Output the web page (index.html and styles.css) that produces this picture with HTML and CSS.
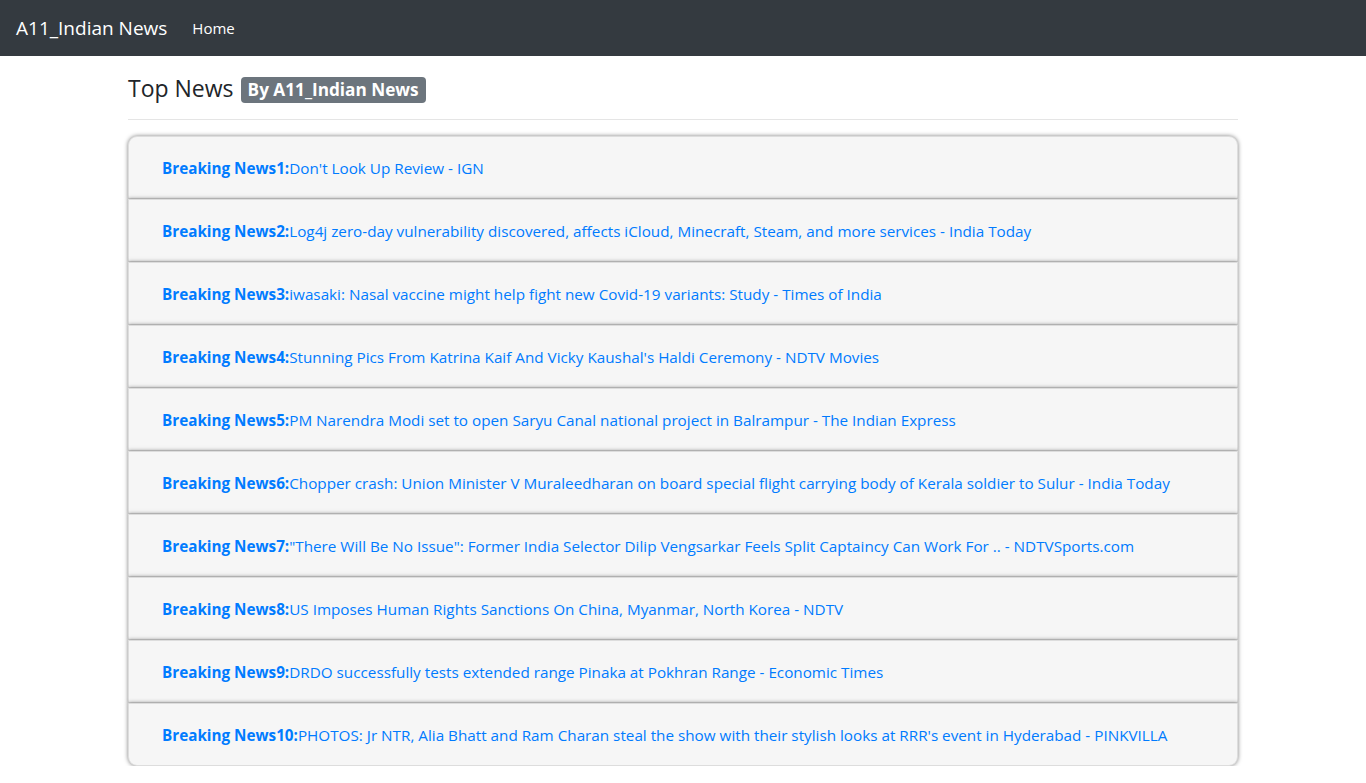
FILE: index.html
```html
<!DOCTYPE html>
<html lang="en">
<head>
<meta charset="utf-8">
<title>A11_Indian News</title>
<link rel="stylesheet" href="styles.css">
</head>
<body>
<nav class="navbar">
  <a class="brand" href="#">A11_Indian News</a>
  <a class="nav-link" href="#">Home</a>
</nav>
<main class="container">
  <h3 class="title">Top News <span class="badge">By A11_Indian News</span></h3>
  <hr class="rule">
  <ul class="news-list">
    <li class="news-item"><a href="#"><b>Breaking News1:</b>Don't Look Up Review - IGN</a></li>
    <li class="news-item"><a href="#"><b>Breaking News2:</b>Log4j zero-day vulnerability discovered, affects iCloud, Minecraft, Steam, and more services - India Today</a></li>
    <li class="news-item"><a href="#"><b>Breaking News3:</b>iwasaki: Nasal vaccine might help fight new Covid-19 variants: Study - Times of India</a></li>
    <li class="news-item"><a href="#"><b>Breaking News4:</b>Stunning Pics From Katrina Kaif And Vicky Kaushal's Haldi Ceremony - NDTV Movies</a></li>
    <li class="news-item"><a href="#"><b>Breaking News5:</b>PM Narendra Modi set to open Saryu Canal national project in Balrampur - The Indian Express</a></li>
    <li class="news-item"><a href="#"><b>Breaking News6:</b>Chopper crash: Union Minister V Muraleedharan on board special flight carrying body of Kerala soldier to Sulur - India Today</a></li>
    <li class="news-item"><a href="#"><b>Breaking News7:</b>"There Will Be No Issue": Former India Selector Dilip Vengsarkar Feels Split Captaincy Can Work For .. - NDTVSports.com</a></li>
    <li class="news-item"><a href="#"><b>Breaking News8:</b>US Imposes Human Rights Sanctions On China, Myanmar, North Korea - NDTV</a></li>
    <li class="news-item"><a href="#"><b>Breaking News9:</b>DRDO successfully tests extended range Pinaka at Pokhran Range - Economic Times</a></li>
    <li class="news-item"><a href="#"><b>Breaking News10:</b>PHOTOS: Jr NTR, Alia Bhatt and Ram Charan steal the show with their stylish looks at RRR's event in Hyderabad - PINKVILLA</a></li>
  </ul>
</main>
</body>
</html>
```
FILE: styles.css
```css
* { box-sizing: border-box; }
html, body { margin: 0; padding: 0; }
body {
  font-family: "Open Sans", "Noto Sans", "Liberation Sans", sans-serif;
  font-size: 16px;
  line-height: 1.5;
  color: #212529;
  background: #fff;
}
a { text-decoration: none; }
.navbar {
  height: 56px;
  background: #343a40;
  display: flex;
  align-items: center;
  padding: 0 16px;
}
.brand {
  color: #fff;
  font-size: 19px;
  margin-right: 17px;
}
.nav-link {
  color: #fff;
  font-size: 15px;
  padding: 8px;
}
.container {
  width: 1110px;
  margin: 0 auto;
}
.title {
  margin: 0;
  padding-top: 18px;
  font-size: 23px;
  font-weight: 500;
  line-height: 1.3;
  display: flex;
  align-items: center;
  gap: 7px;
}
.badge {
  display: inline-block;
  background: #6c757d;
  color: #fff;
  font-size: 17.2px;
  font-weight: 700;
  line-height: 1;
  padding: 4px 7px 4px;
  border-radius: 4px;
  margin-top: 2px;
}
.rule {
  border: 0;
  border-top: 1px solid rgba(0,0,0,.1);
  margin: 15px 0 16px;
}
.news-list {
  list-style: none;
  margin: 0;
  padding: 0;
}
.news-item {
  height: 63px;
  display: flex;
  align-items: center;
  padding: 0 33px;
  background: #f6f6f6;
  border: 1px solid #ddd;
  box-shadow: 0 0 4px rgba(0,0,0,.5);
  position: relative;
}
.news-item:first-child { border-radius: 9px 9px 0 0; }
.news-item:last-child { border-radius: 0 0 9px 9px; }
.news-item a {
  color: #007bff;
  font-size: 15.25px;
  padding-top: 3px;
}
.news-item b { font-weight: 700; }
```
